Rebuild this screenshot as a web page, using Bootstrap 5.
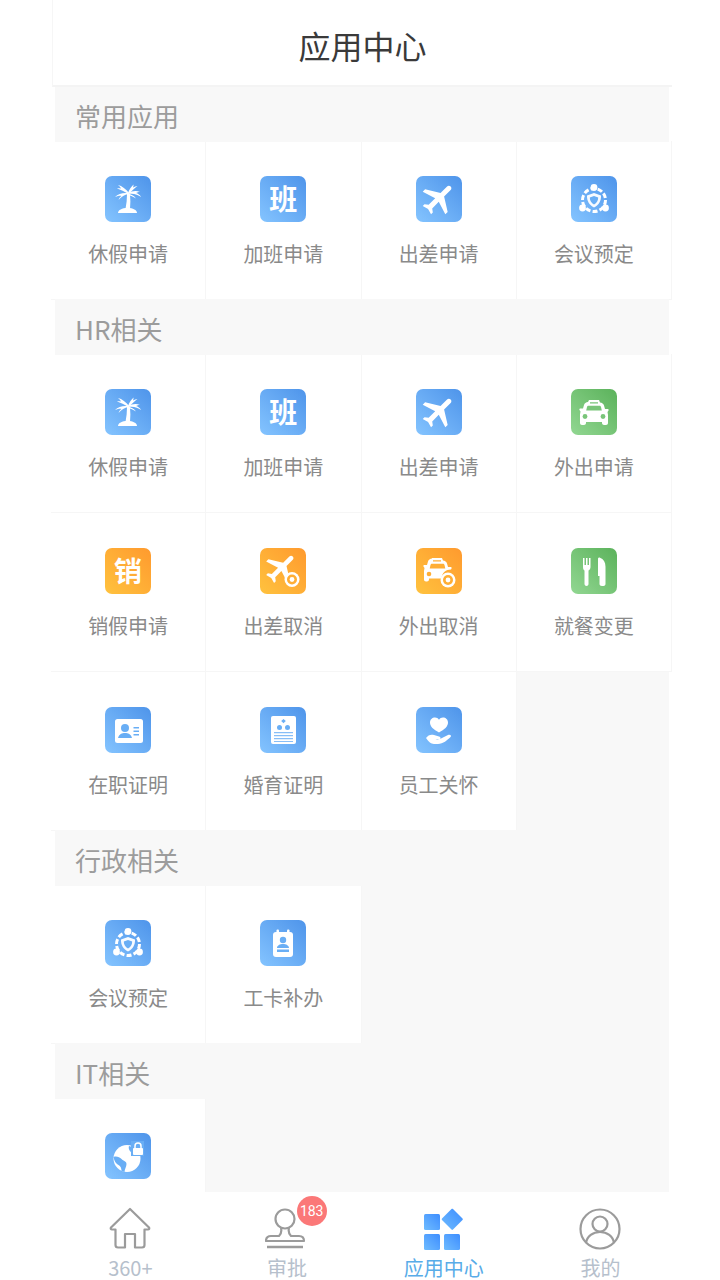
<!DOCTYPE html>
<html lang="zh-CN">

<head>
  <meta charset="utf-8">
  <meta name="viewport" content="width=device-width">
  <title>应用中心</title>
  <link href="https://cdn.jsdelivr.net/npm/bootstrap@5.3.3/dist/css/bootstrap.min.css" rel="stylesheet" type="text/css" />

  <style>
    html,
    body {
      height: 1280px;
      overflow: hidden;
      background: #fff;
      font-family: "Noto Sans CJK SC", "Noto Sans", sans-serif;
    }

    .app-shell {
      width: 621px;
      height: 1280px;
      margin-left: 51px;
    }

    .app-title {
      height: 87px;
      margin-left: 1px;
      border-left: 1px solid #f6f6f6;
      border-bottom: 2px solid #f4f4f4;
      font-size: 32px;
      line-height: 90px;
      color: #3a3a3a;
      text-align: center;
    }

    .app-scroll {
      height: 1105px;
      overflow: hidden;
    }

    /* sits one pixel over the rows on either side */
    .group-title {
      position: relative;
      height: 56px;
      margin: -1px 3px -1px 4px;
      padding-left: 20px;
      background: #f8f8f8;
      font-size: 26px;
      line-height: 60px;
      color: #9c9c9c;
    }

    .app-cell {
      height: 159px;
      padding-top: 35px;
      text-align: center;
      border-right: 1px solid #f6f6f6;
      border-bottom: 1px solid #f6f6f6;
    }

    .app-label {
      margin-top: 18px;
      font-size: 20px;
      line-height: 28px;
      color: #8a8a8a;
    }

    .cell-rest {
      background: #f8f8f8;
      margin-right: 3px;
    }

    .tile {
      width: 46px;
      height: 46px;
      border-radius: 7px;
      margin: 0 auto;
      color: #fff;
      font-size: 28px;
      font-weight: 700;
      line-height: 45px;
    }

    .tile svg {
      display: block;
      width: 46px;
      height: 46px;
    }

    .tile-blue {
      --cut: #69aef5;
      background: linear-gradient(45deg, #84c4ff, #4e94ea);
    }

    .tile-orange {
      --cut: #ffae35;
      background: linear-gradient(45deg, #ffc23e, #ff9a2e);
    }

    .tile-green {
      --cut: #79c579;
      background: linear-gradient(45deg, #92d792, #5bb25b);
    }

    .cut {
      fill: var(--cut);
    }

    .tab-bar {
      height: 88px;
      width: 630px;
      background: #fff;
      margin-left: 1px;
    }

    .tab-item {
      width: 156.7px;
      position: relative;
      text-align: center;
      padding-top: 14px;
      font-size: 20px;
      line-height: 26px;
      color: #b6c0cc;
    }

    .tab-item svg {
      display: block;
      width: 44px;
      height: 46px;
      margin: 0 auto 3px;
    }

    .tab-item.is-current {
      color: #58ace8;
    }

    .tab-count {
      position: absolute;
      top: 4px;
      left: 88px;
      width: 30px;
      height: 30px;
      border-radius: 50%;
      background: #fb7878;
      color: #fff;
      font-family: "Roboto", sans-serif;
      font-size: 14px;
      line-height: 30px;
    }
  </style>

</head>

<body>

  <!-- shared tile glyphs, 46 unit box -->
  <svg width="0" height="0" class="position-absolute">
    <defs>
      <symbol id="i-palm" viewBox="0 0 46 46">
        <g fill="#fff">
          <path d="M24 17c-3-4-7-7-11-8 1 .8 2.500 2 3 3.500-1.500-.5-3-.5-4 0 3 1 8 3 12 6z" />
          <path d="M23 17c-5-.5-10 .5-13 4 3-1 5-1.500 6.500-1-1.500 1-2.500 2.500-3 4 3-3.500 6-5.500 10-6z" />
          <path d="M23 17c1-3 3-6 5.500-8.500 0 1 0 2-.5 3 1.500-1 3-1.500 4.500-1.500-3 2-6 5-8.500 8z" />
          <path d="M23 17c4-2 8-3 12-1-1.500 0-3 .5-4 1 2 .5 4 2 5 4-3-2.500-8-4-13-3z" />
          <path d="M23 18c3 0 6 1.500 8 4.500-3-2-5.500-3-8-3.500z" />
          <path d="M22 18h3c.5 5 .5 10 0 15h-4.500c1-5 1.500-10 1.500-15z" />
          <path d="M13 37c0-3 4-5 9.500-5S32 34 32 37z" />
        </g>
      </symbol>
      <symbol id="i-plane" viewBox="0 0 46 46">
        <path fill="#fff" transform="rotate(45 23 23) translate(3 2.500) scale(1.680)" d="M21 16v-2l-8-5V3.500c0-.83-.67-1.500-1.500-1.500S10 2.670 10 3.500V9l-8 5v2l8-2.500V19l-2 1.500V22l3.500-1 3.500 1v-1.500L13 19v-5.500l8 2.500z" />
      </symbol>
      <symbol id="i-plane-off" viewBox="0 0 46 46">
        <path fill="#fff" transform="rotate(45 22 20) translate(3 1) scale(1.600)" d="M21 16v-2l-8-5V3.500c0-.83-.67-1.500-1.500-1.500S10 2.670 10 3.500V9l-8 5v2l8-2.500V19l-2 1.500V22l3.500-1 3.500 1v-1.500L13 19v-5.500l8 2.500z" />
        <circle cx="32" cy="31.500" r="7.500" fill="#fff" />
        <circle cx="32" cy="31.500" r="5" class="cut" />
        <circle cx="32" cy="31.500" r="2.400" fill="#fff" />
      </symbol>
      <symbol id="i-meet" viewBox="0 0 46 46">
        <circle cx="23" cy="24" r="11.500" fill="none" stroke="#fff" stroke-width="3" stroke-dasharray="5 2.200" />
        <g fill="#fff">
          <circle cx="23" cy="11.500" r="3.400" />
          <circle cx="11.500" cy="32" r="3.400" />
          <circle cx="34.500" cy="32" r="3.400" />
        </g>
        <path fill="#fff" d="M23 17l7 2.500c.3 5-2 9.500-7 12-5-2.500-7.300-7-7-12z" opacity=".95" />
        <path class="cut" d="M23 20l4.200 1.500c0 3-1.400 5.500-4.200 7-2.800-1.500-4.200-4-4.200-7z" />
      </symbol>
      <symbol id="i-car" viewBox="0 0 46 46">
        <path fill="#fff" d="M18 11h10l1 2.500c2 .2 3.500 1.200 4 3l1 3.500h2.500c.8 0 1.500.7 1 1.500l-1 1.500.5 3V34c0 1-.8 2-2 2h-2c-1 0-2-1-2-2v-1H15v1c0 1-1 2-2 2h-2c-1.200 0-2-1-2-2v-8.500l.5-3-1-1.500c-.5-.8.200-1.500 1-1.500H12l1-3.500c.5-1.800 2-2.800 4-3z" />
        <path class="cut" d="M19 13.200h8v1.300h-8zM16 18c.2-.8.8-1.200 1.500-1.200h11c.7 0 1.300.4 1.500 1.200l.8 3.500H15.200z" />
        <circle class="cut" cx="14" cy="27.500" r="2.400" />
        <circle class="cut" cx="32" cy="27.500" r="2.400" />
      </symbol>
      <symbol id="i-car-off" viewBox="0 0 46 46">
        <path fill="#fff" d="M16 10h10l1 2.500c2 .2 3.500 1.200 4 3l1 3.500h2.500c.8 0 1.500.7 1 1.500l-.5 1c-5 0-9 3-9.500 9H13v1c0 1-1 2-2 2H10c-1.200 0-2-1-2-2v-8.500l.5-3-1-1.500c-.5-.8.200-1.500 1-1.500H11l1-3.500c.5-1.800 2-2.800 4-3z" />
        <path class="cut" d="M17 12.200h8v1.300h-8zM14.500 17c.2-.8.8-1.200 1.500-1.200h11c.7 0 1.300.4 1.500 1.200l.8 3.500H13.700z" />
        <circle class="cut" cx="13" cy="26" r="2.300" />
        <circle cx="32" cy="32" r="7.500" fill="#fff" />
        <circle cx="32" cy="32" r="5" class="cut" />
        <circle cx="32" cy="32" r="2.400" fill="#fff" />
      </symbol>
      <symbol id="i-meal" viewBox="0 0 46 46">
        <path fill="#fff" d="M12 10h1.500v7h1.500v-7h1.500v7H18v-7h1.500v9c0 2-1 3-2 3.500V36c0 1-1 2-2 2s-2-1-2-2V22.500c-1-.5-1.500-1.500-1.500-3.500z" />
        <path fill="#fff" d="M27 11c0-1.200 1-1.800 2-1.300 3.500 1.300 5.500 4.300 5.500 9V36c0 1-1 2-2 2h-1.500c-1.500 0-2.500-1-2.500-2v-8h-1.500z" />
      </symbol>
      <symbol id="i-card" viewBox="0 0 46 46">
        <rect x="10" y="12" width="28" height="24" rx="2.500" fill="#fff" />
        <circle class="cut" cx="20" cy="21" r="4" />
        <path class="cut" d="M13 31c1-4 4-5 7-5s6 1 7 5z" />
        <path class="cut" d="M28.500 20h5.500v1.400h-5.500zM28.500 23.500h5.500v1.400h-5.500zM28.500 27h5.500v1.400h-5.500z" />
      </symbol>
      <symbol id="i-cert" viewBox="0 0 46 46">
        <rect x="11" y="9" width="25" height="28" rx="2" fill="#fff" />
        <path class="cut" d="M23.500 12l2.300 2-2.300 2.300-2.300-2.300z" />
        <circle class="cut" cx="19.500" cy="20.500" r="2.500" />
        <circle class="cut" cx="27.500" cy="20.500" r="2.500" />
        <path class="cut" d="M14 25h19v1.300H14zM14 28h19v1.300H14zM14 31h19v1.300H14zM14 34h19v1H14z" opacity=".8" />
      </symbol>
      <symbol id="i-care" viewBox="0 0 46 46">
        <path fill="#fff" d="M23 25.500c-5.500-3-9-6-9-10 0-3 2.300-5 5-5 1.700 0 3.100.8 4 2.200.9-1.400 2.300-2.200 4-2.200 2.700 0 5 2 5 5 0 4-3.500 7-9 10z" />
        <path fill="#fff" d="M10 31c2-3 5-4 8-3l5 1.500c2 .5 2 2.500 0 3h-3.500c1 .5 2 .5 3 .3l9.500-4.800c2-1 4 .5 2.500 2-3 3-7.500 7-12.500 7h-4c-3 0-6-3-8-6z" />
      </symbol>
      <symbol id="i-badge" viewBox="0 0 46 46">
        <rect x="13" y="12" width="20" height="25" rx="3" fill="#fff" />
        <rect x="16.500" y="9.500" width="2.500" height="5" rx="1" fill="#fff" />
        <rect x="27" y="9.500" width="2.500" height="5" rx="1" fill="#fff" />
        <circle class="cut" cx="23" cy="20" r="3.200" />
        <path class="cut" d="M17 28c0-2.500 3-4 6-4s6 1.500 6 4zM17 29.500h12v2.500H17z" />
      </symbol>
      <symbol id="i-globe" viewBox="0 0 46 46">
        <circle cx="22" cy="25.500" r="13.500" fill="#fff" />
        <path class="cut" d="M8.500 24c3-1 6 0 8 2s5 2 5 5-2 5-2 8l-3-1c0-3-1-5-3-6s-4-3-5-8zM24 13c-1 3 1 6 4 7s6 3 8 2l-2-6z" />
        <path class="cut" d="M26 8h13v15H26z" />
        <path fill="#fff" d="M29 15h8c.5 0 1 .5 1 1v5c0 .5-.5 1-1 1h-8c-.5 0-1-.5-1-1v-5c0-.5.5-1 1-1z" />
        <path fill="none" stroke="#fff" stroke-width="1.500" d="M30 15v-2c0-4 6-4 6 0v2" />
      </symbol>
    </defs>
  </svg>

  <div class="app-shell">
    <div class="app-title">应用中心</div>

    <div class="app-scroll">
      <div class="group-title">常用应用</div>
      <div class="row g-0">
        <div class="col-3 app-cell"><div class="tile tile-blue"><svg><use href="#i-palm" /></svg></div><div class="app-label">休假申请</div></div>
        <div class="col-3 app-cell"><div class="tile tile-blue">班</div><div class="app-label">加班申请</div></div>
        <div class="col-3 app-cell"><div class="tile tile-blue"><svg><use href="#i-plane" /></svg></div><div class="app-label">出差申请</div></div>
        <div class="col-3 app-cell"><div class="tile tile-blue"><svg><use href="#i-meet" /></svg></div><div class="app-label">会议预定</div></div>
      </div>

      <div class="group-title">HR相关</div>
      <div class="row g-0">
        <div class="col-3 app-cell"><div class="tile tile-blue"><svg><use href="#i-palm" /></svg></div><div class="app-label">休假申请</div></div>
        <div class="col-3 app-cell"><div class="tile tile-blue">班</div><div class="app-label">加班申请</div></div>
        <div class="col-3 app-cell"><div class="tile tile-blue"><svg><use href="#i-plane" /></svg></div><div class="app-label">出差申请</div></div>
        <div class="col-3 app-cell"><div class="tile tile-green"><svg><use href="#i-car" /></svg></div><div class="app-label">外出申请</div></div>
        <div class="col-3 app-cell"><div class="tile tile-orange">销</div><div class="app-label">销假申请</div></div>
        <div class="col-3 app-cell"><div class="tile tile-orange"><svg><use href="#i-plane-off" /></svg></div><div class="app-label">出差取消</div></div>
        <div class="col-3 app-cell"><div class="tile tile-orange"><svg><use href="#i-car-off" /></svg></div><div class="app-label">外出取消</div></div>
        <div class="col-3 app-cell"><div class="tile tile-green"><svg><use href="#i-meal" /></svg></div><div class="app-label">就餐变更</div></div>
        <div class="col-3 app-cell"><div class="tile tile-blue"><svg><use href="#i-card" /></svg></div><div class="app-label">在职证明</div></div>
        <div class="col-3 app-cell"><div class="tile tile-blue"><svg><use href="#i-cert" /></svg></div><div class="app-label">婚育证明</div></div>
        <div class="col-3 app-cell"><div class="tile tile-blue"><svg><use href="#i-care" /></svg></div><div class="app-label">员工关怀</div></div>
        <div class="col cell-rest"></div>
      </div>

      <div class="group-title">行政相关</div>
      <div class="row g-0">
        <div class="col-3 app-cell"><div class="tile tile-blue"><svg><use href="#i-meet" /></svg></div><div class="app-label">会议预定</div></div>
        <div class="col-3 app-cell"><div class="tile tile-blue"><svg><use href="#i-badge" /></svg></div><div class="app-label">工卡补办</div></div>
        <div class="col cell-rest"></div>
      </div>

      <div class="group-title">IT相关</div>
      <div class="row g-0">
        <div class="col-3 app-cell"><div class="tile tile-blue"><svg><use href="#i-globe" /></svg></div></div>
        <div class="col cell-rest"></div>
      </div>
    </div>

    <nav class="tab-bar d-flex">
      <div class="tab-item">
        <svg viewBox="0 0 44 46" fill="none" stroke="#9b9b9b" stroke-width="2.200" stroke-linejoin="round">
          <path d="M22 3L3 21.500c-.8 1 0 2 1 2h3.500V39c0 1.500 1 2.500 2.500 2.500h7V28h10v13.500h7c1.500 0 2.500-1 2.500-2.500V23.500H40c1 0 1.800-1 1-2z" />
        </svg>
        360+
      </div>
      <div class="tab-item">
        <svg viewBox="2 0 44 46" fill="none" stroke="#9b9b9b" stroke-width="2.200" stroke-linejoin="round">
          <circle cx="22" cy="13" r="9.500" />
          <path d="M18 22c1 4 0 6-2 8H8c-3 0-5 2-5 5h38c0-3-2-5-5-5h-8c-2-2-3-4-2-8" />
          <path stroke-width="2.600" d="M4 41h36" />
        </svg>
        审批
        <span class="tab-count">183</span>
      </div>
      <div class="tab-item is-current">
        <svg viewBox="0 0 44 46">
          <defs>
            <linearGradient id="tabGrad" x1="0" y1="1" x2="1" y2="0">
              <stop offset="0" stop-color="#6fbcff" />
              <stop offset="1" stop-color="#3d8dff" />
            </linearGradient>
          </defs>
          <g fill="url(#tabGrad)">
            <rect x="2" y="8" width="16" height="16" rx="1.500" />
            <rect x="2" y="28" width="16" height="16" rx="1.500" />
            <rect x="22" y="28" width="16" height="16" rx="1.500" />
            <path d="M31 3l9.500 9.500c.5.500.5 1 0 1.500L31 23.500c-.5.500-1 .5-1.500 0L20 14c-.5-.5-.5-1 0-1.500L29.500 3c.5-.5 1-.5 1.500 0z" />
          </g>
        </svg>
        应用中心
      </div>
      <div class="tab-item">
        <svg viewBox="0 0 44 46" fill="none" stroke="#9b9b9b" stroke-width="2.200">
          <circle cx="22" cy="23" r="19.500" />
          <circle cx="22" cy="18" r="7.500" />
          <path d="M8 37c1-7 7-11 14-11s13 4 14 11" />
        </svg>
        我的
      </div>
    </nav>
  </div>

  <script src="https://cdn.jsdelivr.net/npm/bootstrap@5.3.3/dist/js/bootstrap.bundle.min.js"></script>
</body>

</html>
